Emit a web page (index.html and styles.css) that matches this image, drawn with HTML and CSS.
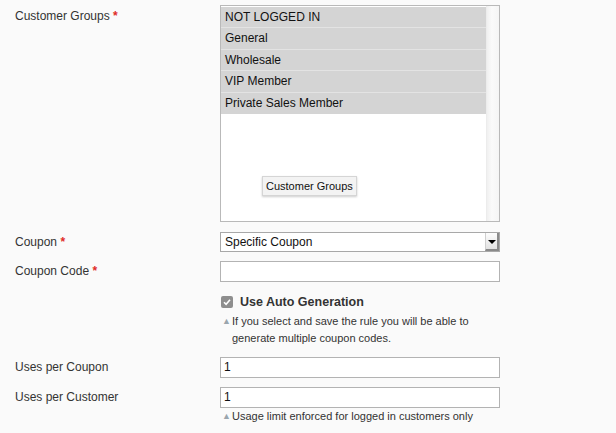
FILE: index.html
```html
<!DOCTYPE html>
<html>
<head>
<meta charset="utf-8">
<link rel="stylesheet" href="styles.css">
</head>
<body>
<div class="form">
  <div class="row row-groups">
    <div class="label">Customer Groups <span class="req">*</span></div>
    <div class="field">
      <div class="listbox">
        <div class="options">
          <div class="opt">NOT LOGGED IN</div>
          <div class="opt">General</div>
          <div class="opt">Wholesale</div>
          <div class="opt">VIP Member</div>
          <div class="opt">Private Sales Member</div>
        </div>
        <div class="scroll"></div>
        <div class="tooltip">Customer Groups</div>
      </div>
    </div>
  </div>
  <div class="row row-coupon">
    <div class="label">Coupon <span class="req">*</span></div>
    <div class="field">
      <div class="select"><span class="sel-text">Specific Coupon</span><span class="sel-btn"><span class="arrow"></span></span></div>
    </div>
  </div>
  <div class="row row-code">
    <div class="label">Coupon Code <span class="req">*</span></div>
    <div class="field">
      <div class="input"></div>
      <div class="check-row"><span class="checkbox"><svg width="12" height="12" viewBox="0 0 12 12"><path d="M3 6.2 L5.1 8.3 L9 3.8" fill="none" stroke="#fff" stroke-width="1.6"/></svg></span><span class="check-label">Use Auto Generation</span></div>
      <div class="note"><span class="tri">▲</span><span>If you select and save the rule you will be able to<br>generate multiple coupon codes.</span></div>
    </div>
  </div>
  <div class="row row-uses">
    <div class="label">Uses per Coupon</div>
    <div class="field"><div class="input">1</div></div>
  </div>
  <div class="row row-cust">
    <div class="label">Uses per Customer</div>
    <div class="field">
      <div class="input">1</div>
      <div class="note"><span class="tri">▲</span><span>Usage limit enforced for logged in customers only</span></div>
    </div>
  </div>
</div>
</body>
</html>
```
FILE: styles.css
```css
html, body {
  margin: 0;
  padding: 0;
  background: #fafafa;
  font-family: "Liberation Sans", Arial, sans-serif;
  font-size: 12px;
  color: #333;
}
.form {
  padding: 5px 0 0 15px;
}
.row {
  display: grid;
  grid-template-columns: 205px 280px;
}
.label {
  color: #333;
  font-size: 12px;
  line-height: 16px;
  padding-top: 2px;
}
.row-groups .label {
  padding-top: 3px;
}
.req {
  color: #e02b27;
  font-weight: bold;
}
.listbox {
  position: relative;
  height: 215px;
  border: 1px solid #b9b9b9;
  background: #fff;
  display: flex;
}
.options {
  flex: 1;
  padding-top: 1px;
}
.opt {
  background: #d4d4d4;
  color: #111;
  line-height: 20px;
  padding-left: 4px;
  border-bottom: 1px solid #e3e3e3;
  box-sizing: border-box;
  height: 21.4px;
}
.opt:last-child {
  border-bottom: none;
}
.scroll {
  width: 12px;
  background: linear-gradient(to right, #f0f0f0, #fafafa 40%, #f5f5f5);
  border-left: 1px solid #ececec;
}
.tooltip {
  position: absolute;
  left: 41px;
  top: 170px;
  padding: 2px 3px;
  font-size: 11px;
  color: #111;
  background: #f3f3f3;
  border: 1px solid #d5d5d5;
  box-shadow: 0 1px 2px rgba(0,0,0,0.2);
  line-height: 14px;
}
.row-coupon {
  margin-top: 10px;
}
.select {
  height: 18px;
  border: 1px solid #a8a8a8;
  background: #fff;
  display: flex;
  align-items: stretch;
}
.sel-text {
  flex: 1;
  padding-left: 4px;
  line-height: 18px;
  color: #111;
}
.sel-btn {
  width: 14px;
  background: linear-gradient(#fdfdfd, #e2e2e2);
  border-left: 1px solid #cfcfcf;
  border-right: 2px solid #8a8a8a;
  border-bottom: 2px solid #8a8a8a;
  box-sizing: border-box;
  display: flex;
  align-items: center;
  justify-content: center;
}
.arrow {
  width: 0;
  height: 0;
  border-left: 4px solid transparent;
  border-right: 4px solid transparent;
  border-top: 4px solid #000;
  margin-top: 1px;
}
.row-code {
  margin-top: 9px;
}
.input {
  height: 19px;
  border: 1px solid #b3b3b3;
  background: #fff;
  padding-left: 3px;
  line-height: 19px;
  color: #111;
}
.check-row {
  display: flex;
  align-items: center;
  margin-top: 13px;
  height: 14px;
}
.checkbox {
  width: 12px;
  height: 12px;
  background: #8e8e8e;
  border-radius: 2px;
  margin-left: 1px;
  display: inline-flex;
}
.check-label {
  font-weight: bold;
  font-size: 12.5px;
  margin-left: 7px;
  color: #333;
}
.note {
  display: flex;
  font-size: 11px;
  line-height: 17px;
  color: #333;
  margin-top: 4px;
}
.tri {
  color: #9aa5ad;
  font-size: 9px;
  width: 12px;
  padding-left: 2px;
  box-sizing: border-box;
  line-height: 17px;
}
.row-uses {
  margin-top: 10px;
}
.row-cust {
  margin-top: 9px;
}
.row-cust .note {
  margin-top: 0;
}
```
